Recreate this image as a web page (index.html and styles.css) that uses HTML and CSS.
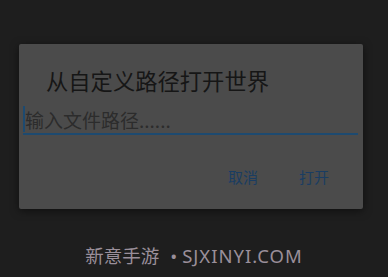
FILE: index.html
```html
<!DOCTYPE html>
<html lang="zh">
<head>
<meta charset="utf-8">
<link rel="stylesheet" href="styles.css">
</head>
<body>
<div class="screen">
  <div class="dialog">
    <div class="title">从自定义路径打开世界</div>
    <div class="field">
      <span class="caret"></span>
      <span class="placeholder">输入文件路径......</span>
    </div>
    <div class="actions">
      <span class="btn">取消</span>
      <span class="btn">打开</span>
    </div>
  </div>
  <div class="footer"><span class="cn">新意手游</span><span class="dot">•</span><span class="en">SJXINYI.COM</span></div>
</div>
</body>
</html>
```

FILE: styles.css
```css
html, body {
  margin: 0;
  padding: 0;
  background: #1e1e1e;
}
.screen {
  width: 388px;
  height: 277px;
  display: flex;
  flex-direction: column;
  font-family: "Noto Sans CJK SC", "Noto Sans", sans-serif;
  overflow: hidden;
}
.dialog {
  margin: 44px 0 0 19px;
  width: 344px;
  height: 165px;
  background: #4b4b4b;
  border-radius: 2px;
  box-shadow: 0 2px 8px rgba(0,0,0,0.5);
  display: flex;
  flex-direction: column;
  box-sizing: border-box;
}
.title {
  margin: 22px 0 0 27px;
  font-size: 22.3px;
  line-height: 28px;
  color: #161616;
}
.field {
  margin: 9px 5px 0 4px;
  height: 30px;
  border-bottom: 2px solid #1d4a70;
  display: flex;
  align-items: center;
}
.caret {
  width: 2px;
  height: 26px;
  background: #1d4a70;
  margin-top: 2px;
}
.placeholder {
  font-size: 19px;
  color: #2c2c2c;
  line-height: 26px;
  margin-top: 4px;
}
.actions {
  margin-top: 32px;
  display: flex;
  justify-content: flex-end;
  gap: 41px;
  padding-right: 34px;
}
.btn {
  font-size: 15px;
  line-height: 20px;
  color: #1a3d62;
}
.footer {
  margin-top: 34px;
  display: flex;
  justify-content: center;
  align-items: baseline;
  font-family: "Noto Sans", "Noto Sans CJK SC", sans-serif;
  font-size: 18.5px;
  line-height: 24px;
  color: #9a8f9a;
}
.cn {
  font-family: "Noto Sans CJK SC", sans-serif;
}
.dot {
  margin: 0 5px 0 11px;
}
.en {
  letter-spacing: 1px;
}
```
